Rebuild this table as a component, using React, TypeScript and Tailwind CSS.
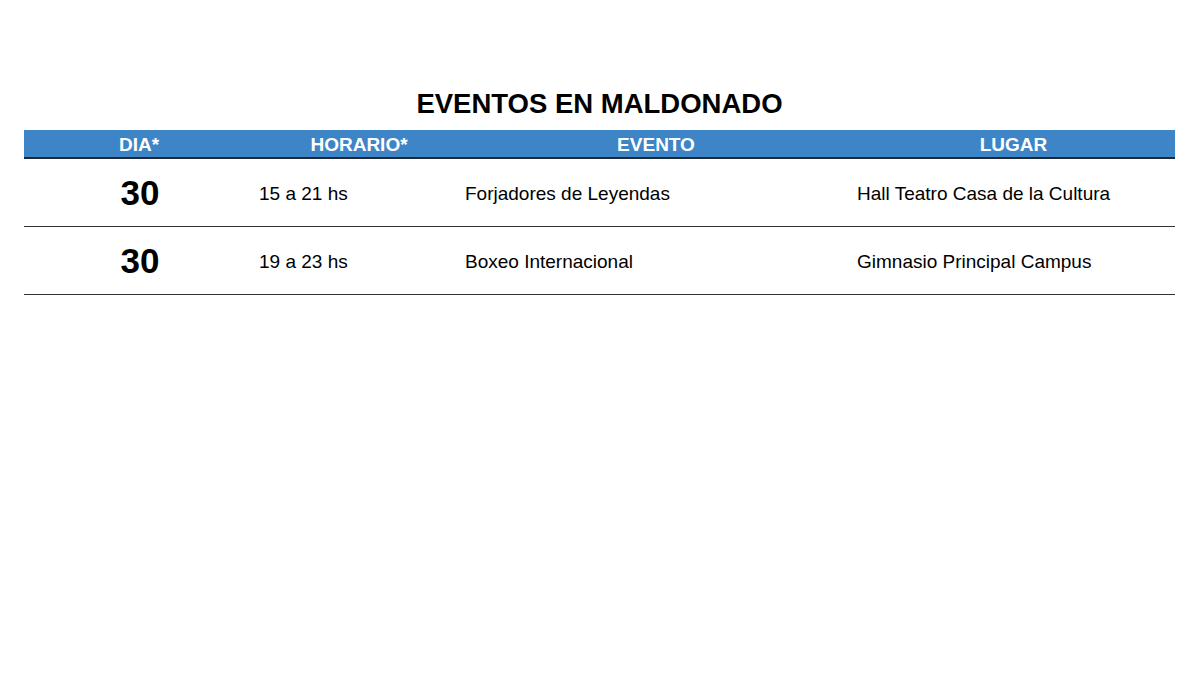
import React from 'react'

const events = [
  { day: '30', time: '15 a 21 hs', name: 'Forjadores de Leyendas', place: 'Hall Teatro Casa de la Cultura' },
  { day: '30', time: '19 a 23 hs', name: 'Boxeo Internacional', place: 'Gimnasio Principal Campus' }
]

export default function App() {
  return (
    <div
      className="w-[1200px] h-[675px] bg-white text-black"
      style={{ fontFamily: '"Liberation Sans", Arial, sans-serif' }}
    >
      <div className="pt-[87px] px-[24px] w-[1199px]">
        <h1 className="text-center font-bold text-[27.5px] leading-[34px] h-[43px]">
          EVENTOS EN MALDONADO
        </h1>
        <div className="grid grid-cols-[230px_206px_392px_323px] bg-[#3d85c6] border-b-2 border-[#1e2a36] h-[29px] items-center text-white font-bold text-[19px] leading-none">
          <div className="text-center pt-[2px]">DIA*</div>
          <div className="text-center pl-1 pt-[2px]">HORARIO*</div>
          <div className="text-center pt-[2px]">EVENTO</div>
          <div className="text-center pt-[2px]">LUGAR</div>
        </div>
        {events.map((ev, i) => (
          <div
            key={i}
            className="grid grid-cols-[230px_206px_392px_323px] h-[68px] items-center border-b-[1.5px] border-[#333333] text-[19px]"
          >
            <div className="text-center font-bold text-[35px] leading-none pl-[2px]">{ev.day}</div>
            <div className="pl-[5px] pt-[3px]">{ev.time}</div>
            <div className="pl-[5px] pt-[3px]">{ev.name}</div>
            <div className="pl-[5px] pt-[3px]">{ev.place}</div>
          </div>
        ))}
      </div>
    </div>
  )
}
